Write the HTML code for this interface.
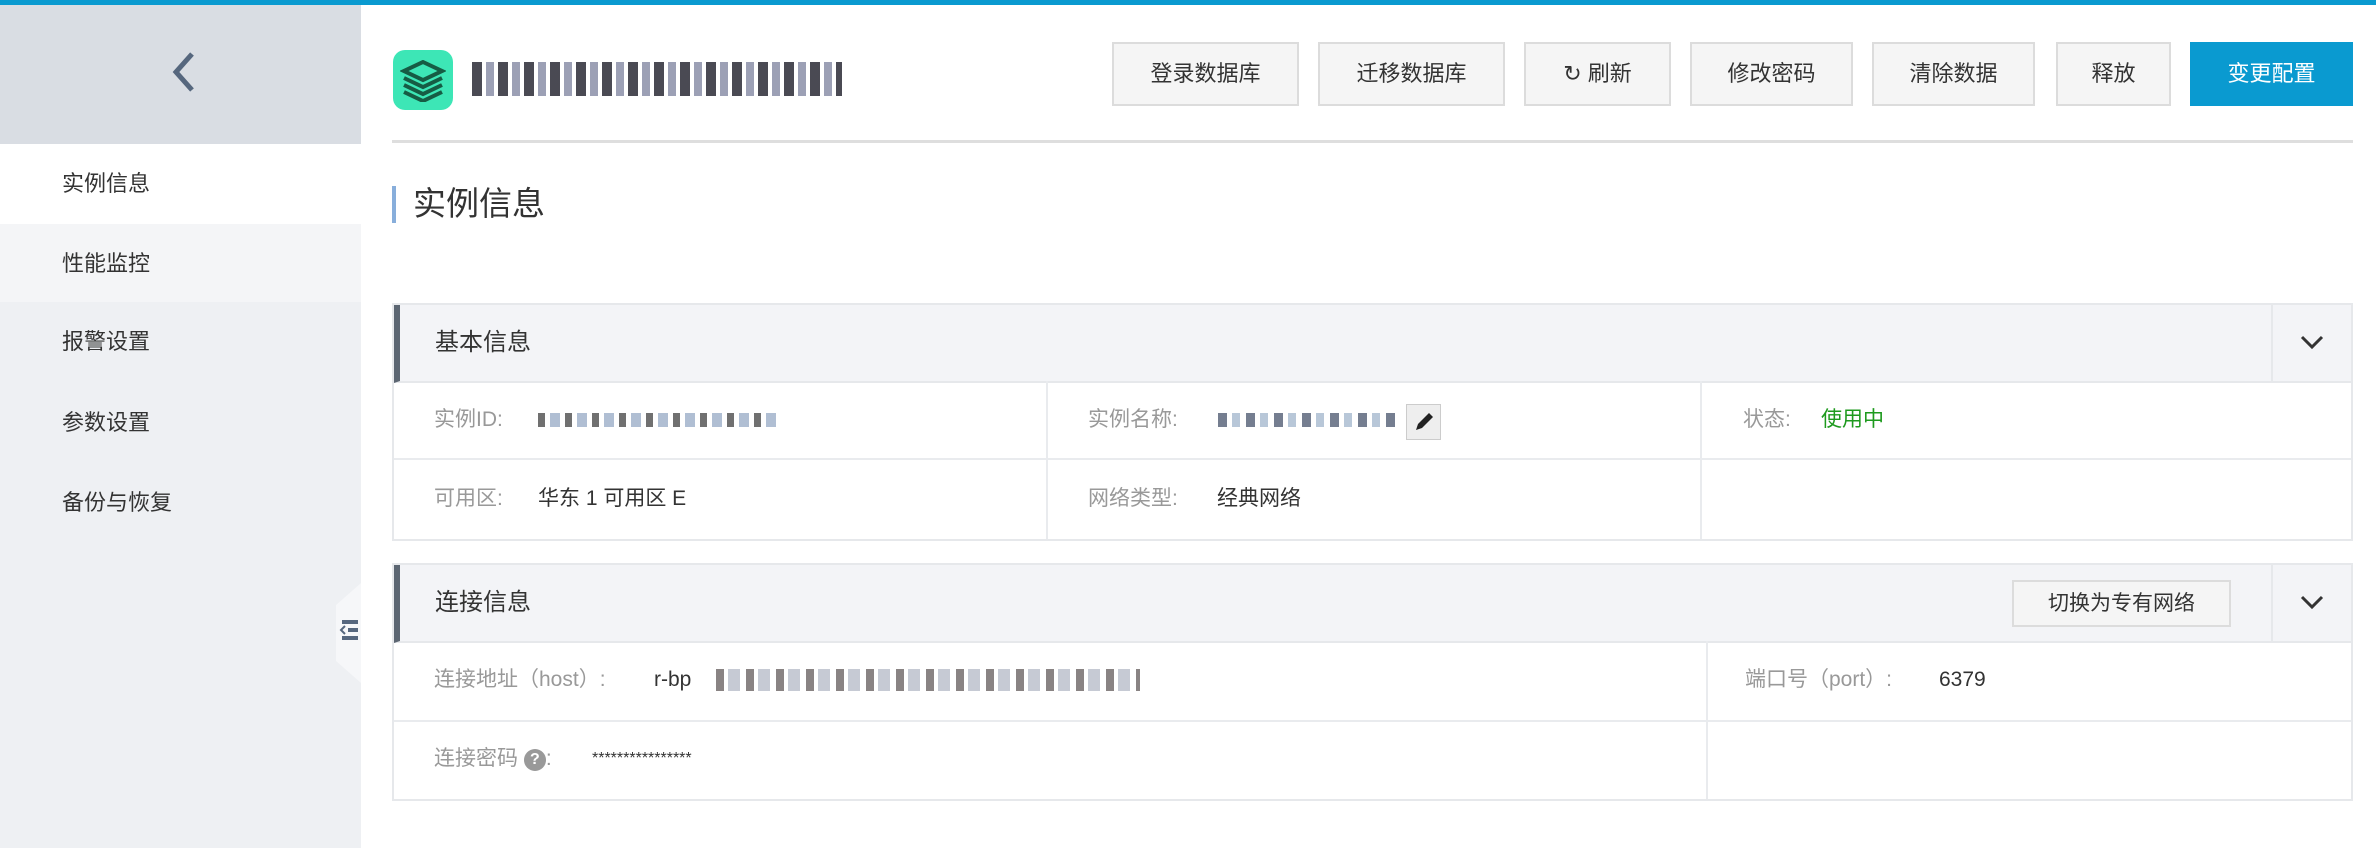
<!DOCTYPE html>
<html><head><meta charset="utf-8"><style>
*{margin:0;padding:0;box-sizing:border-box}
body{width:2376px;height:848px;position:relative;overflow:hidden;background:#fff;font-family:"Liberation Sans","Noto Sans CJK SC",sans-serif;color:#333}
.a{position:absolute}
.topbar{left:0;top:0;width:2376px;height:5px;background:#0a9ad0}
.side{left:0;top:5px;width:361px;height:843px;background:#eef0f3}
.sidetop{left:0;top:5px;width:361px;height:139px;background:#d9dde3}
.item{left:0;width:361px;height:80px;font-size:22px;line-height:80px;padding-left:62px;color:#333}
.btn{top:42px;height:64px;background:#f5f5f5;border:2px solid #dcdcdc;font-size:22px;line-height:60px;text-align:center;color:#333}
.panel{left:392px;width:1961px;border:2px solid #e6e8eb;background:#fff}
.ph{position:absolute;left:0;top:0;right:0;height:78px;background:#f3f4f7;border-left:6px solid #5c6672;border-bottom:2px solid #e6e8eb}
.ph span{position:absolute;left:35px;top:0;line-height:76px;font-size:24px;color:#333}
.chev{position:absolute;right:0;top:0;width:80px;height:76px;border-left:2px solid #e6e8eb}
.lbl{font-size:21px;color:#999;line-height:30px}
.val{font-size:21px;color:#333;line-height:30px}
.hl{height:2px;background:#e9ebee}
.vl{width:2px;background:#e9ebee}
</style></head><body>
<div class="a topbar"></div>
<div class="a side"></div>
<div class="a sidetop"></div>
<svg class="a" style="left:168px;top:50px" width="30" height="44" viewBox="0 0 30 44"><path d="M24 4 L8 22 L24 40" fill="none" stroke="#56677e" stroke-width="5"/></svg>
<div class="a item" style="top:144px;background:#fff">实例信息</div>
<div class="a item" style="top:224px;background:#f4f5f7;height:78px">性能监控</div>
<div class="a item" style="top:302px">报警设置</div>
<div class="a item" style="top:383px">参数设置</div>
<div class="a item" style="top:463px">备份与恢复</div>
<svg class="a" style="left:336px;top:583px" width="25" height="100" viewBox="0 0 25 100"><path d="M25 0 L0 22 L0 78 L25 100 Z" fill="#f6f7f9"/><rect x="6" y="37" width="16" height="4" fill="#56677e"/><rect x="12" y="45" width="10" height="4" fill="#56677e"/><rect x="6" y="53" width="16" height="4" fill="#56677e"/><path d="M9 43 L5 47 L9 51" fill="none" stroke="#56677e" stroke-width="2"/></svg>

<div class="a" style="left:393px;top:50px;width:60px;height:60px;border-radius:12px;background:#3de6b6"></div>
<svg class="a" style="left:400px;top:60px" width="46" height="42" viewBox="0 0 46 42"><path d="M23 2 L42 11 L23 20 L4 11 Z" fill="none" stroke="#165c44" stroke-width="4"/><path d="M4 18 L23 27 L42 18 M4 25 L23 34 L42 25 M4 32 L23 41 L42 32" fill="none" stroke="#165c44" stroke-width="4"/></svg>
<div class="a" style="left:472px;top:62px;width:370px;height:34px;background:repeating-linear-gradient(90deg,#2a2a35 0 10px,#fff 10px 14px,#8a8fa8 14px 22px,#fff 22px 26px);opacity:.85"></div>

<div class="a btn" style="left:1112px;width:187px">登录数据库</div>
<div class="a btn" style="left:1318px;width:187px">迁移数据库</div>
<div class="a btn" style="left:1524px;width:147px">&#x21bb; 刷新</div>
<div class="a btn" style="left:1690px;width:163px">修改密码</div>
<div class="a btn" style="left:1872px;width:163px">清除数据</div>
<div class="a btn" style="left:2056px;width:115px">释放</div>
<div class="a btn" style="left:2190px;width:163px;background:#0a9ad0;border-color:#0a9ad0;color:#fff">变更配置</div>
<div class="a" style="left:392px;top:140px;width:1961px;height:3px;background:#dedede"></div>

<div class="a" style="left:392px;top:186px;width:4px;height:37px;background:#88aedb"></div>
<div class="a" style="left:413px;top:182px;font-size:33px;line-height:44px;color:#333">实例信息</div>

<div class="a panel" style="top:303px;height:238px">
<div class="ph"><span>基本信息</span><div class="chev"><svg style="position:absolute;left:27px;top:30px" width="24" height="16"><path d="M2 2 L12 12 L22 2" fill="none" stroke="#333" stroke-width="3"/></svg></div></div>
</div>
<div class="a hl" style="left:394px;top:458px;width:1957px"></div>
<div class="a vl" style="left:1046px;top:381px;height:158px"></div>
<div class="a vl" style="left:1700px;top:381px;height:158px"></div>
<div class="a lbl" style="left:434px;top:405px">实例ID:</div>
<div class="a" style="left:538px;top:413px;width:240px;height:14px;background:repeating-linear-gradient(90deg,#333 0 7px,#fff 7px 12px,#8ea3c0 12px 22px,#fff 22px 27px);opacity:.7"></div>
<div class="a lbl" style="left:1088px;top:405px">实例名称:</div>
<div class="a" style="left:1218px;top:413px;width:178px;height:14px;background:repeating-linear-gradient(90deg,#3a4660 0 9px,#fff 9px 14px,#9aafc8 14px 22px,#fff 22px 28px);opacity:.7"></div>
<div class="a" style="left:1406px;top:404px;width:35px;height:36px;background:#eee;border:1px solid #ccc"></div>
<svg class="a" style="left:1412px;top:410px" width="24" height="24"><path d="M4 20 L6 14 L17 3 L21 7 L10 18 Z" fill="#222"/></svg>
<div class="a lbl" style="left:1743px;top:405px">状态:</div>
<div class="a val" style="left:1821px;top:405px;color:#1e9a1e">使用中</div>
<div class="a lbl" style="left:434px;top:484px">可用区:</div>
<div class="a val" style="left:538px;top:484px">华东 1 可用区 E</div>
<div class="a lbl" style="left:1088px;top:484px">网络类型:</div>
<div class="a val" style="left:1217px;top:484px">经典网络</div>

<div class="a panel" style="top:563px;height:238px">
<div class="ph"><span>连接信息</span><div class="chev"><svg style="position:absolute;left:27px;top:30px" width="24" height="16"><path d="M2 2 L12 12 L22 2" fill="none" stroke="#333" stroke-width="3"/></svg></div></div>
</div>
<div class="a" style="left:2012px;top:580px;width:219px;height:47px;background:#f5f5f5;border:2px solid #dcdcdc;font-size:21px;line-height:43px;text-align:center;color:#333">切换为专有网络</div>
<div class="a hl" style="left:394px;top:720px;width:1957px"></div>
<div class="a vl" style="left:1706px;top:641px;height:158px"></div>
<div class="a lbl" style="left:434px;top:665px">连接地址（host）:</div>
<div class="a val" style="left:654px;top:665px">r-bp</div>
<div class="a" style="left:716px;top:669px;width:424px;height:22px;background:repeating-linear-gradient(90deg,#3a3030 0 8px,#fff 8px 12px,#a0a6b8 12px 24px,#fff 24px 30px);opacity:.6"></div>
<div class="a lbl" style="left:1745px;top:665px">端口号（port）:</div>
<div class="a val" style="left:1939px;top:665px">6379</div>
<div class="a lbl" style="left:434px;top:744px">连接密码 <span style="display:inline-block;width:22px;height:22px;border-radius:11px;background:#999;color:#fff;font-size:16px;line-height:22px;text-align:center;font-weight:bold;vertical-align:1px">?</span>:</div>
<div class="a val" style="left:592px;top:744px;font-size:16px">****************</div>
</body></html>
